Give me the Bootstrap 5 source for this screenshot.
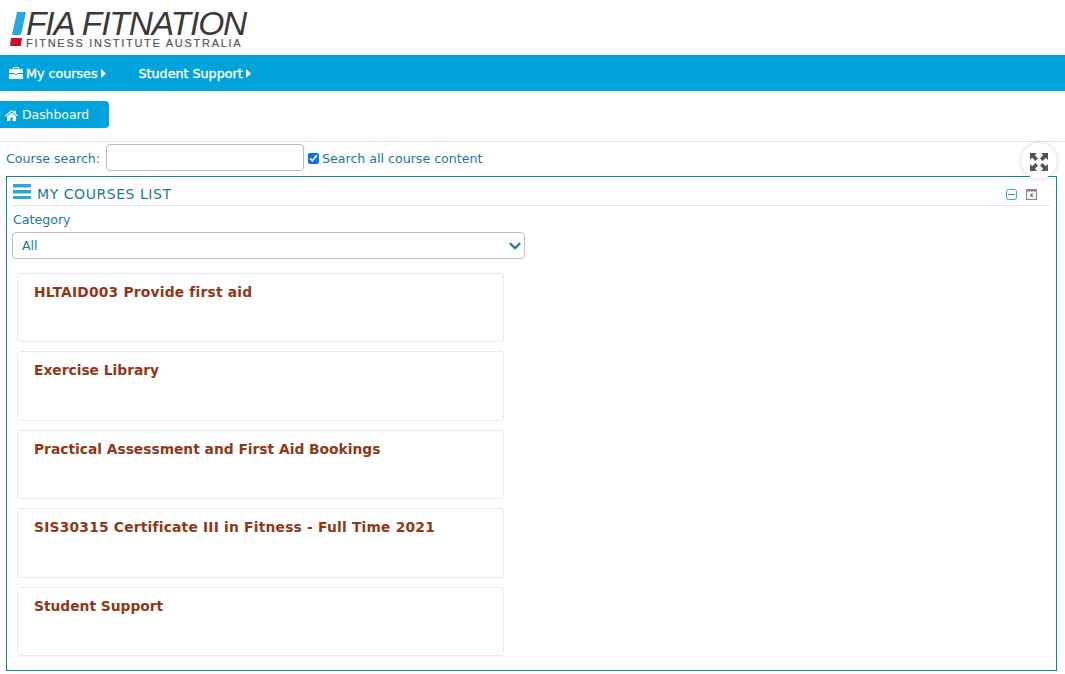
<!DOCTYPE html>
<html lang="en">
<head>
<meta charset="utf-8">
<title>My courses</title>
<link href="https://cdn.jsdelivr.net/npm/bootstrap@5.3.0/dist/css/bootstrap.min.css" rel="stylesheet">
<style>
html,body{height:674px;overflow:hidden}
body{font-family:"DejaVu Sans",Verdana,sans-serif;font-size:12.6px;color:#1b7a98;background:#fff}
.logo-bar{height:55px;padding:10px 0 0 10px}
.logo-row{display:flex;width:240px;height:38px;overflow:visible}
.logo-mark{flex:none;margin-right:-1px}
.logo-words{display:flex;flex-direction:column}
.logo-main{font-family:"Liberation Sans",Arial,sans-serif;font-style:italic;font-size:33.5px;line-height:27px;letter-spacing:-1.1px;color:#3a3a3a;white-space:nowrap}
.logo-sub{font-family:"Liberation Sans",Arial,sans-serif;font-size:11px;line-height:11px;margin-top:1px;letter-spacing:1.72px;color:#555;white-space:nowrap;-webkit-text-stroke:.2px #555}
.top-nav{height:36px;background:#00a3dc;padding:1px 0 0 9px;gap:33px}
.top-link{color:#fff;font-size:12.7px;text-decoration:none;display:flex;align-items:center;gap:3px;-webkit-text-stroke:.35px #fff}
.top-link:hover{color:#fff}
.dash-wrap{height:51px;padding-top:10px;border-bottom:1px solid #e4e4e4}
.dash-btn{display:inline-flex;align-items:center;gap:4px;width:109px;height:27px;background:#00a3dc;color:#fff;border:0;border-radius:0 4px 4px 0;padding:1px 0 0 5px;font-size:12.4px;text-decoration:none}
.dash-btn:hover{background:#00a3dc;color:#fff}
.search-row{height:34px;padding:0 0 3px 6px;position:relative}
.search-label{margin-top:4px}
.search-input{width:198px;height:27px;border:1px solid #bdbdbd;border-radius:4px;margin-left:6px;margin-right:4px;padding:0 6px}
.search-check{width:11px;height:11px;margin:1px 3px 0 0;accent-color:#0d6efd}
.expand-btn{position:absolute;right:8px;top:1px;width:36px;height:36px;background:#fff;border-radius:50%;box-shadow:0 0 4px rgba(0,0,0,.2);display:flex;align-items:center;justify-content:center;z-index:2;padding-top:2px}
.course-box{margin-left:6px;width:1051px;height:495px;border:1px solid #0f7f9f;padding:0 6px 0 5px}
.box-head{height:29px;border-bottom:1px solid #e6e6e6;position:relative}
.hamburger{margin:7px 0 0 1px}
.box-title{font-size:14px;letter-spacing:.55px;color:#1b7a98;margin-left:6px;padding-top:7px}
.box-tools{margin-left:auto;gap:9px;padding:12px 13px 0 0}
.cat-label{padding:6px 0 0 1px;height:26px;line-height:16px}
.cat-select{display:block;width:513px;height:27px;padding:2px 9px 0;font-size:12.6px;color:#1b7a98;border:1px solid #bdbdbd;border-radius:4px;background-color:#fff;background-position:right 3px center;background-size:12px 12px;font-family:inherit;--bs-form-select-bg-img:url("data:image/svg+xml,%3csvg xmlns='http://www.w3.org/2000/svg' viewBox='0 0 16 16'%3e%3cpath fill='none' stroke='%231b7a98' stroke-linecap='round' stroke-linejoin='round' stroke-width='3' d='m2 5 6 6 6-6'/%3e%3c/svg%3e")}
.course-list{padding:14px 0 0 5px;gap:9px}
.course-item{width:487px;height:69px;border:1px dotted #d6d6d6;border-radius:4px;padding:8px 16px;background:#fff}
.course-item:nth-child(even){height:70px}
.course-name{font-size:13.8px;font-weight:700;color:#8f3818;text-decoration:none;line-height:21px;display:block}
.course-name:hover{color:#8f3818}
.name-wide{letter-spacing:.22px}
</style>
</head>
<body>
<header class="logo-bar">
  <div class="logo-row">
    <svg class="logo-mark" width="17" height="38" viewBox="0 0 17 38" aria-hidden="true">
      <polygon points="7,2 16,2 11,25 2,25" fill="#27a9df"/>
      <polygon points="1,28 12,28 11,36 0,36" fill="#c8102e"/>
    </svg>
    <div class="logo-words">
      <div class="logo-main">FIA FITNATION</div>
      <div class="logo-sub">FITNESS INSTITUTE AUSTRALIA</div>
    </div>
  </div>
</header>
<nav class="top-nav d-flex align-items-center">
  <a class="top-link" href="#">
    <svg width="14" height="12" viewBox="0 0 14 12" aria-hidden="true"><path fill="#fff" d="M5 0h4a1 1 0 0 1 1 1v1h3a1 1 0 0 1 1 1v3H8v1H6V6H0V3a1 1 0 0 1 1-1h3V1a1 1 0 0 1 1-1zm0 1v1h4V1H5zM0 7h6v1h2V7h6v4a1 1 0 0 1-1 1H1a1 1 0 0 1-1-1V7z"/></svg>
    My courses
    <svg width="5" height="9" viewBox="0 0 5 9" aria-hidden="true"><polygon points="0,0 5,4.5 0,9" fill="#fff"/></svg>
  </a>
  <a class="top-link" href="#">
    Student Support
    <svg width="5" height="9" viewBox="0 0 5 9" aria-hidden="true"><polygon points="0,0 5,4.5 0,9" fill="#fff"/></svg>
  </a>
</nav>
<div class="dash-wrap">
  <a class="dash-btn btn" href="#">
    <svg width="13" height="11" viewBox="0 0 13 11" aria-hidden="true"><path fill="#fff" d="M6.5 0 0 5.6l.7.8L6.5 1.5l5.8 4.9.7-.8L10.8 3.7V.8H9v1.4L6.5 0zM2 6.6V11h3.3V7.6h2.4V11H11V6.6L6.5 2.8 2 6.6z"/></svg>
    Dashboard
  </a>
</div>
<form class="search-row d-flex align-items-center">
  <label class="search-label" for="cs">Course search:</label>
  <input id="cs" class="search-input" type="text">
  <input id="ca" class="search-check" type="checkbox" checked>
  <label class="search-label" for="ca">Search all course content</label>
  <div class="expand-btn">
    <svg width="20" height="20" viewBox="0 0 20 20" aria-hidden="true"><g fill="#555"><polygon points="1,1 8,1 5.8,3.2 9,6.4 6.4,9 3.2,5.8 1,8"/><polygon points="19,1 19,8 16.8,5.8 13.6,9 11,6.4 14.2,3.2 12,1"/><polygon points="1,19 1,12 3.2,14.2 6.4,11 9,13.6 5.8,16.8 8,19"/><polygon points="19,19 12,19 14.2,16.8 11,13.6 13.6,11 16.8,14.2 19,12"/></g></svg>
  </div>
</form>
<section class="course-box">
  <div class="box-head d-flex">
    <svg class="hamburger" width="18" height="15" viewBox="0 0 18 15" aria-hidden="true"><g fill="#2ca9d2"><rect width="18" height="3.4" rx=".6"/><rect y="6" width="18" height="3.4" rx=".6"/><rect y="12" width="18" height="3" rx=".6"/></g></svg>
    <div class="box-title">MY COURSES LIST</div>
    <div class="box-tools d-flex">
      <svg width="11" height="11" viewBox="0 0 11 11" aria-hidden="true"><rect x=".5" y=".5" width="10" height="10" rx="2" fill="#fff" stroke="#39a6d8"/><rect x="2" y="5" width="7" height="1" fill="#777"/></svg>
      <svg width="11" height="11" viewBox="0 0 11 11" aria-hidden="true"><rect x=".5" y=".5" width="10" height="10" fill="#f3f3f3" stroke="#888"/><rect width="11" height="2.5" fill="#888"/><polygon points="6.5,4 6.5,8.5 4,6.2" fill="#666"/></svg>
    </div>
  </div>
  <div class="cat-label"><label for="cat">Category</label></div>
  <select id="cat" class="form-select cat-select"><option>All</option></select>
  <div class="course-list d-flex flex-column">
    <div class="course-item"><a class="course-name name-wide" href="#">HLTAID003 Provide first aid</a></div>
    <div class="course-item"><a class="course-name" href="#">Exercise Library</a></div>
    <div class="course-item"><a class="course-name" href="#">Practical Assessment and First Aid Bookings</a></div>
    <div class="course-item"><a class="course-name name-wide" href="#">SIS30315 Certificate III in Fitness - Full Time 2021</a></div>
    <div class="course-item"><a class="course-name" href="#">Student Support</a></div>
  </div>
</section>
<script src="https://cdn.jsdelivr.net/npm/bootstrap@5.3.0/dist/js/bootstrap.bundle.min.js"></script>
</body>
</html>
